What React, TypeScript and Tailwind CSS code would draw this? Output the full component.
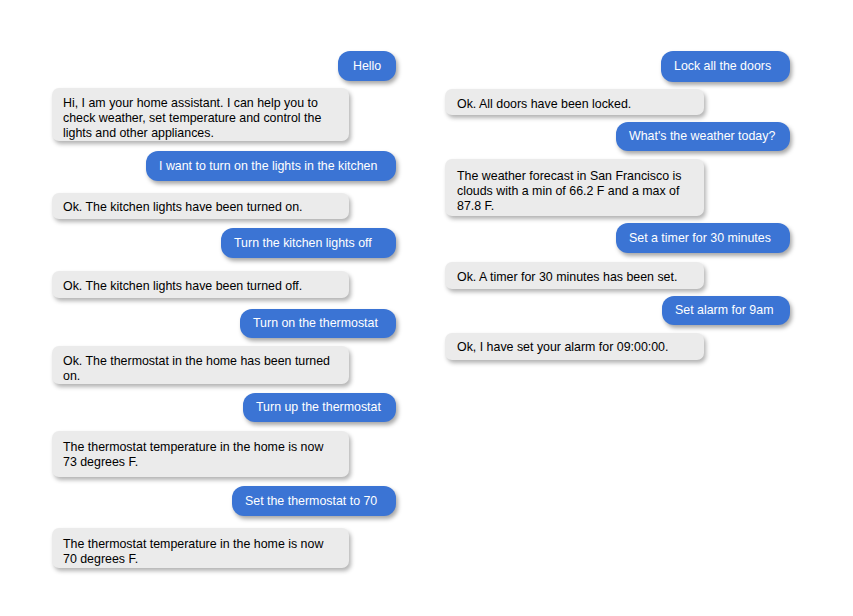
import React from 'react'

type Msg = {
  from: 'me' | 'bot'
  text: string
  // spacing + size, written out so Tailwind picks them up
  box: string
}

const left: Msg[] = [
  { from: 'me', text: 'Hello', box: 'mt-0 h-[30px] w-[58px] pl-[15px]' },
  {
    from: 'bot',
    text: 'Hi, I am your home assistant. I can help you to check weather, set temperature and control the lights and other appliances.',
    box: 'mt-[7px] h-[53px] pt-[7px]',
  },
  { from: 'me', text: 'I want to turn on the lights in the kitchen', box: 'mt-[10px] h-[30px] w-[250px]' },
  { from: 'bot', text: 'Ok. The kitchen lights have been turned on.', box: 'mt-[12px] h-[26px] pt-[3px]' },
  { from: 'me', text: 'Turn the kitchen lights off', box: 'mt-[9px] h-[30px] w-[175px]' },
  { from: 'bot', text: 'Ok. The kitchen lights have been turned off.', box: 'mt-[13px] h-[27px] pt-[3px]' },
  { from: 'me', text: 'Turn on the thermostat', box: 'mt-[11px] h-[29px] w-[156px]' },
  { from: 'bot', text: 'Ok. The thermostat in the home has been turned on.', box: 'mt-[8px] h-[38px] pt-[7px]' },
  { from: 'me', text: 'Turn up the thermostat', box: 'mt-[9px] h-[29px] w-[153px]' },
  { from: 'bot', text: 'The thermostat temperature in the home is now 73 degrees F.', box: 'mt-[9px] h-[46px] pt-[2px]' },
  { from: 'me', text: 'Set the thermostat to 70', box: 'mt-[9px] h-[30px] w-[164px]' },
  { from: 'bot', text: 'The thermostat temperature in the home is now 70 degrees F.', box: 'mt-[12px] h-[40px] pt-[8px]' },
]

const right: Msg[] = [
  { from: 'me', text: 'Lock all the doors', box: 'mt-0 h-[31px] w-[129px]' },
  { from: 'bot', text: 'Ok. All doors have been locked.', box: 'mt-[7px] h-[26px] pt-[5px]' },
  { from: 'me', text: "What's the weather today?", box: 'mt-[7px] h-[29px] w-[174px]' },
  {
    from: 'bot',
    text: 'The weather forecast in San Francisco is clouds with a min of 66.2 F and a max of 87.8 F.',
    box: 'mt-[8px] h-[57px] pt-[8px]',
  },
  { from: 'me', text: 'Set a timer for 30 minutes', box: 'mt-[7px] h-[30px] w-[174px]' },
  { from: 'bot', text: 'Ok. A timer for 30 minutes has been set.', box: 'mt-[9px] h-[27px] pt-[3px]' },
  { from: 'me', text: 'Set alarm for 9am', box: 'mt-[7px] h-[29px] w-[128px]' },
  { from: 'bot', text: 'Ok, I have set your alarm for 09:00:00.', box: 'mt-[8px] h-[27px] pt-[1px]' },
]

const Bubble = ({ msg, botBox }: { msg: Msg; botBox: string }) => {
  if (msg.from === 'me') {
    return (
      <div
        className={`self-end flex items-center pl-[13px] rounded-[12px] bg-[#3b74d4] text-white shadow-[2px_3px_4px_rgba(0,0,0,0.35)] whitespace-nowrap ${msg.box}`}
      >
        {msg.text}
      </div>
    )
  }
  return (
    <div
      className={`self-start flex items-center pr-[10px] rounded-[7px] bg-[#ebebeb] text-black shadow-[2px_3px_4px_rgba(0,0,0,0.3)] ${botBox} ${msg.box}`}
    >
      <p>{msg.text}</p>
    </div>
  )
}

export default function App() {
  return (
    <div className="w-[853px] h-[616px] bg-white flex gap-[49px] pt-[51px] pl-[52px] font-['Liberation_Sans',Arial,sans-serif] text-[12.4px] leading-[15px]">
      <div className="w-[344px] flex flex-col">
        {left.map((m, i) => (
          <Bubble key={i} msg={m} botBox="w-[297px] pl-[11px]" />
        ))}
      </div>
      <div className="w-[345px] flex flex-col">
        {right.map((m, i) => (
          <Bubble key={i} msg={m} botBox="w-[259px] pl-[12px]" />
        ))}
      </div>
    </div>
  )
}
